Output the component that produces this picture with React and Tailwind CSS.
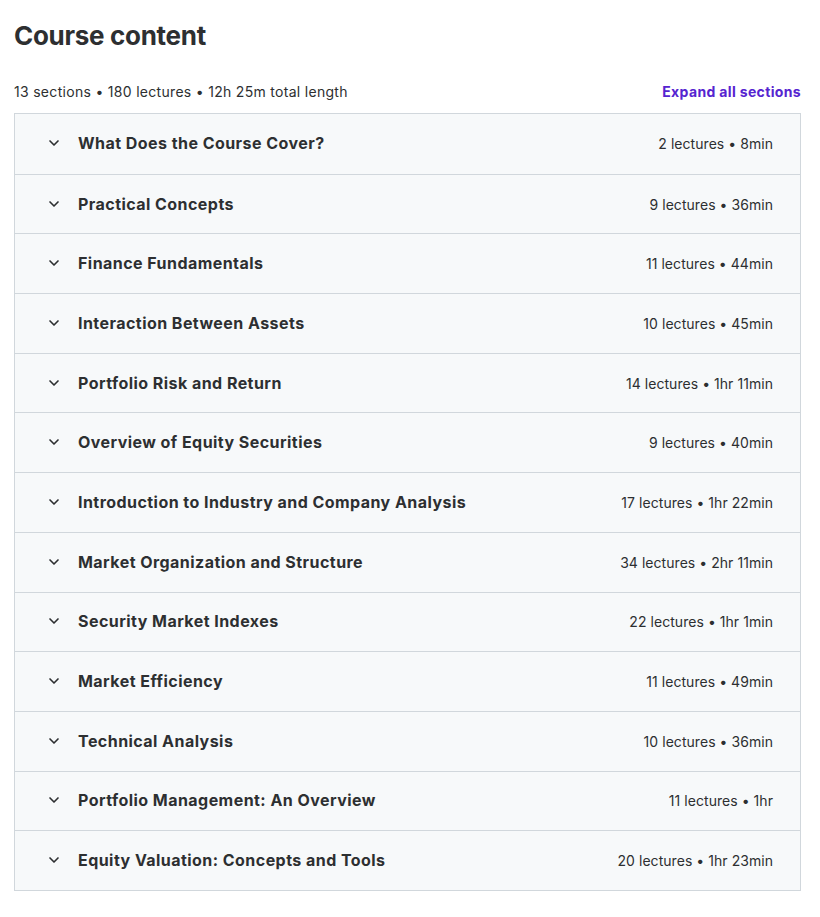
import React from 'react';
import { ChevronDown } from 'lucide-react';

const sections = [
  ['What Does the Course Cover?', '2 lectures • 8min'],
  ['Practical Concepts', '9 lectures • 36min'],
  ['Finance Fundamentals', '11 lectures • 44min'],
  ['Interaction Between Assets', '10 lectures • 45min'],
  ['Portfolio Risk and Return', '14 lectures • 1hr 11min'],
  ['Overview of Equity Securities', '9 lectures • 40min'],
  ['Introduction to Industry and Company Analysis', '17 lectures • 1hr 22min'],
  ['Market Organization and Structure', '34 lectures • 2hr 11min'],
  ['Security Market Indexes', '22 lectures • 1hr 1min'],
  ['Market Efficiency', '11 lectures • 49min'],
  ['Technical Analysis', '10 lectures • 36min'],
  ['Portfolio Management: An Overview', '11 lectures • 1hr'],
  ['Equity Valuation: Concepts and Tools', '20 lectures • 1hr 23min'],
];

const App = () => {
  return (
    <div className="min-h-screen bg-white text-[#2d2f31] font-['Inter',sans-serif]">
      <div className="ml-[14px] w-[787px] pt-[20px]">
        <h2 className="text-[26px] leading-[32px] font-bold tracking-[-0.3px]">Course content</h2>
        <div className="mt-[30px] flex items-center justify-between">
          <span className="text-[14px] leading-[20px] tracking-[0.3px] text-[#2d2f31]">
            13 sections • 180 lectures • 12h 25m total length
          </span>
          <button className="text-[14px] leading-[20px] font-bold tracking-[0.35px] text-[#5624d0]">
            Expand all sections
          </button>
        </div>
        <div className="mt-[11px] border border-[#d1d7dc] bg-[#f7f9fa]">
          {sections.map(([title, meta], i) => (
            <div
              key={title}
              className={`flex items-center justify-between h-[59.7px] pl-[31px] pr-[27px] ${i > 0 ? 'border-t border-[#d1d7dc]' : ''}`}
            >
              <div className="flex items-center gap-[16px] -mt-[1px]">
                <ChevronDown size={16} strokeWidth={2.5} className="text-[#2d2f31]" />
                <span className="text-[16px] font-bold tracking-[0.45px]">{title}</span>
              </div>
              <span className="text-[14px] tracking-[0.05px] text-[#2d2f31]">{meta}</span>
            </div>
          ))}
        </div>
      </div>
    </div>
  );
};

export default App;
